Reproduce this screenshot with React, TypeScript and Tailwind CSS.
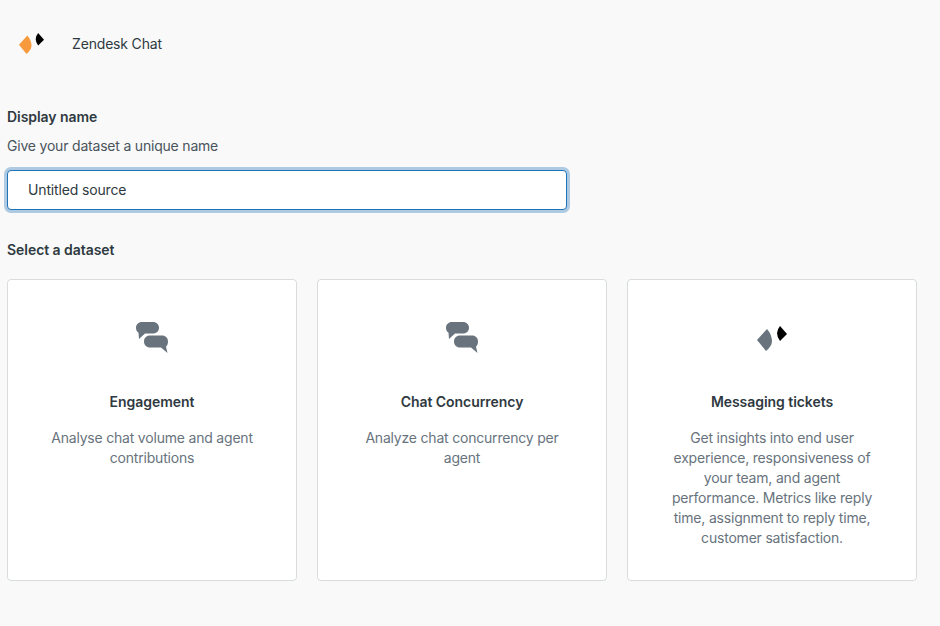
const font = { fontFamily: 'Inter, "Noto Sans", sans-serif' };

function ChatIcon() {
  return (
    <svg width="32" height="32" viewBox="0 0 32 32" className="text-[#68737d]" fill="currentColor">
      <path d="M6 0h11c3.500 0 6 2.500 6 5.800s-2.500 5.800-6 5.800H9L3 17l-.5-6.200C.8 9.800 0 8 0 5.800 0 2.500 2.500 0 6 0Z" />
      <path d="M14 13.500h12c3.500 0 6 2.500 6 6 0 2.500-1 4.300-2 5.200L31.500 31 25 25.500H14c-3.500 0-6-2.500-6-6s2.500-6 6-6Z" />
    </svg>
  );
}

function DiamondLogo({ color, width, height }: { color: string; width: number; height: number }) {
  return (
    <svg width={width} height={height} viewBox="0 0 30 25">
      <path d="M0 14 10 3Q14.500 8 15 15 15 20 9 25Z" fill={color} />
      <path d="M20 7Q20.500 3 23 0L30 8 23 15Q20 11 20 7Z" fill="#000" />
    </svg>
  );
}

function DatasetCard({ title, desc, icon }: { title: string; desc: string[]; icon: React.ReactNode }) {
  return (
    <div className="w-[290px] h-[302px] bg-white border border-[#d8dcde] rounded-[4px] flex flex-col items-center">
      <div className="h-[34px] mt-[41px] flex items-center justify-center">{icon}</div>
      <div className="mt-[37px] text-[14px] leading-[20px] font-semibold tracking-[-0.05px] text-[#2f3941]">{title}</div>
      <div className="mt-[16px] text-[14px] leading-[20px] tracking-[-0.2px] text-[#68737d] text-center">
        {desc.map((line) => (
          <div key={line}>{line}</div>
        ))}
      </div>
    </div>
  );
}

export default function App() {
  return (
    <div style={font} className="w-[940px] h-[626px] overflow-hidden bg-[#f9f9f9] px-[7px] pt-px">
      {/* Source header */}
      <div className="flex items-center h-[24px] mt-[30px] pl-[12px]">
        <DiamondLogo color="#f79a3e" width={25} height={21} />
        <span className="ml-[28px] text-[14px] tracking-[-0.17px] text-[#2f3941]">Zendesk Chat</span>
      </div>

      {/* Name field */}
      <div className="mt-[52px] text-[14px] leading-[20px] font-semibold tracking-[-0.05px] text-[#2f3941]">Display name</div>
      <div className="mt-[9px] text-[14px] leading-[20px] tracking-[-0.2px] text-[#49545c]">Give your dataset a unique name</div>
      <input
        readOnly
        value="Untitled source"
        className="block mt-[14px] w-[560px] h-[40px] px-[20px] pb-[2px] bg-white border border-[#1f73b7] rounded-[4px] shadow-[0_0_0_3px_rgba(31,115,183,0.35)] text-[14px] tracking-[-0.15px] text-[#2f3941] outline-none"
      />

      {/* Dataset picker */}
      <div className="mt-[30px] text-[14px] leading-[20px] font-semibold tracking-[-0.05px] text-[#2f3941]">Select a dataset</div>
      <div className="flex gap-[20px] mt-[19px]">
        <DatasetCard
          title="Engagement"
          desc={['Analyse chat volume and agent', 'contributions']}
          icon={<ChatIcon />}
        />
        <DatasetCard
          title="Chat Concurrency"
          desc={['Analyze chat concurrency per', 'agent']}
          icon={<ChatIcon />}
        />
        <DatasetCard
          title="Messaging tickets"
          desc={[
            'Get insights into end user',
            'experience, responsiveness of',
            'your team, and agent',
            'performance. Metrics like reply',
            'time, assignment to reply time,',
            'customer satisfaction.',
          ]}
          icon={<DiamondLogo color="#68737d" width={30} height={25} />}
        />
      </div>
    </div>
  );
}
